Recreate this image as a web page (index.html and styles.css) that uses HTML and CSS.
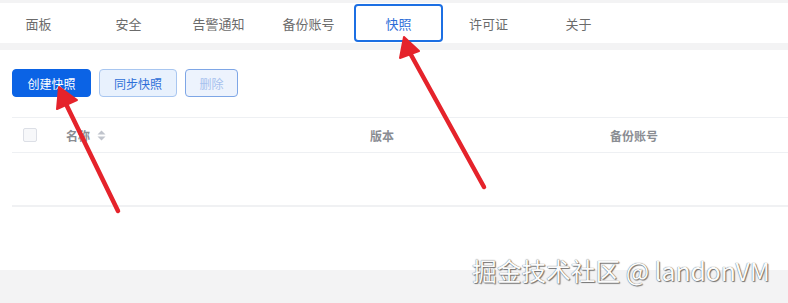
FILE: index.html
```html
<!DOCTYPE html>
<html lang="zh-CN">
<head>
    <meta charset="UTF-8">
    <meta name="viewport" content="width=device-width, initial-scale=1.0">
    <title>快照</title>
    <link rel="stylesheet" href="styles.css">
</head>
<body>
    <div class="tabs">
        <div class="tab">面板</div>
        <div class="tab">安全</div>
        <div class="tab">告警通知</div>
        <div class="tab">备份账号</div>
        <div class="tab active">快照</div>
        <div class="tab">许可证</div>
        <div class="tab">关于</div>
    </div>

    <div class="content">
        <div class="toolbar">
            <button class="btn btn-primary">创建快照</button>
            <button class="btn btn-light">同步快照</button>
            <button class="btn btn-disabled">删除</button>
        </div>

        <div class="table">
            <div class="row head">
                <div class="cell check"><span class="checkbox"></span></div>
                <div class="cell name">名称
                    <svg class="sort" width="9" height="11" viewBox="0 0 9 11">
                        <path d="M4.5 0.5 L8.5 4.5 L0.5 4.5 Z" fill="#c0c4cc"/>
                        <path d="M4.5 10.5 L8.5 6.5 L0.5 6.5 Z" fill="#c0c4cc"/>
                    </svg>
                </div>
                <div class="cell">版本</div>
                <div class="cell">备份账号</div>
            </div>
            <div class="row empty"></div>
        </div>
    </div>

    <div class="footer"></div>

    <!-- red pointers drawn over the page -->
    <svg class="arrows" width="788" height="303" viewBox="0 0 788 303">
        <line x1="118" y1="211" x2="66" y2="104" stroke="#e5232b" stroke-width="4.5" stroke-linecap="round"/>
        <path d="M59 87 L77 100 L57 109 Z" fill="#e5232b" stroke="#e5232b" stroke-width="2" stroke-linejoin="round"/>
        <line x1="484" y1="187" x2="410" y2="53" stroke="#e5232b" stroke-width="4.5" stroke-linecap="round"/>
        <path d="M404 37 L419 51 L400 58 Z" fill="#e5232b" stroke="#e5232b" stroke-width="2" stroke-linejoin="round"/>
    </svg>

    <div class="watermark">掘金技术社区 @ landonVM</div>
</body>
</html>
```

FILE: styles.css
```css
body {
    margin: 0;
    padding-top: 3px;
    font-family: "Noto Sans CJK SC", "Noto Sans", sans-serif;
    background-color: #f3f3f4;
    height: 300px;
    overflow: hidden;
    position: relative;
}
.tabs {
    display: flex;
    height: 40px;
    background-color: #ffffff;
    padding-left: 0;
    margin-bottom: 7px;
}
.tab {
    width: 89px;
    margin-right: 1px;
    display: flex;
    align-items: center;
    justify-content: center;
    font-size: 13px;
    color: #6b6b6b;
    box-sizing: border-box;
}
.tab:first-child {
    margin-left: -6px;
}
.active {
    height: 38px;
    margin-top: 1px;
    border: 2px solid #1c6fe3;
    border-radius: 4px;
    color: #2f6fd8;
}
.content {
    background-color: #ffffff;
    padding: 19px 0 0 12px;
    height: 201px;
}
.toolbar {
    display: flex;
    gap: 8px;
    margin-bottom: 20px;
}
.btn {
    height: 28px;
    padding: 0;
    border-radius: 4px;
    font-family: inherit;
    font-size: 12px;
    box-sizing: border-box;
}
.btn-primary {
    width: 79px;
    background-color: #0b63e5;
    border: 1px solid #0b63e5;
    color: #ffffff;
}
.btn-light {
    width: 78px;
    background-color: #e8f1fd;
    border: 1px solid #a8c6f0;
    color: #2f6fd8;
}
.btn-disabled {
    width: 53px;
    background-color: #edf3fd;
    border: 1px solid #7ea6e6;
    color: #a6c1ee;
}
.table {
    border-top: 1px solid #eef0f3;
}
.row {
    display: grid;
    grid-template-columns: 54px 304px 240px 1fr;
    border-bottom: 1px solid #eef0f3;
}
.head {
    height: 34px;
    align-items: center;
}
.empty {
    height: 52px;
    border-bottom-width: 2px;
    border-bottom-color: #f0f1f3;
}
.cell {
    font-size: 12px;
    font-weight: bold;
    color: #8a8d93;
    display: flex;
    align-items: center;
}
.check {
    padding-left: 11px;
}
.checkbox {
    width: 12px;
    height: 12px;
    border: 1px solid #dcdfe6;
    border-radius: 2px;
    background-color: #f7f8fa;
}
.sort {
    margin-left: 7px;
}
.footer {
    height: 33px;
}
.arrows {
    position: absolute;
    top: 0;
    left: 0;
    pointer-events: none;
}
.watermark {
    position: absolute;
    left: 472px;
    top: 252px;
    font-family: "Noto Sans CJK SC", sans-serif;
    font-size: 24.7px;
    color: #fbfbfb;
    text-shadow: 0 0 1px #444, 1px 1px 1px #777;
    white-space: nowrap;
}
```
